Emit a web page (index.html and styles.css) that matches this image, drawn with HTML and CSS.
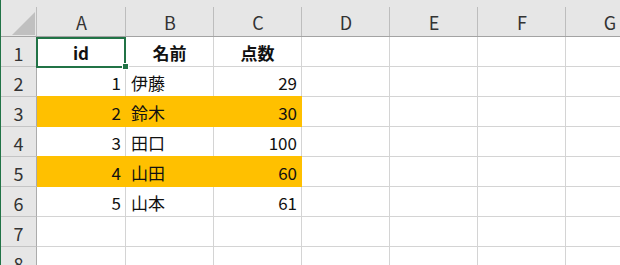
FILE: index.html
```html
<!DOCTYPE html>
<html>
<head>
  <title>Sheet1</title>
  <link rel="stylesheet" href="styles.css">
</head>
<body>
  <div class="sheet">
    <div class="corner"><span class="tri"></span></div>
    <div class="ch">A</div>
    <div class="ch">B</div>
    <div class="ch">C</div>
    <div class="ch">D</div>
    <div class="ch">E</div>
    <div class="ch">F</div>
    <div class="ch">G</div>

    <div class="rh">1</div>
    <div class="c hd sel">id</div>
    <div class="c hd">名前</div>
    <div class="c hd">点数</div>
    <div class="c"></div><div class="c"></div><div class="c"></div><div class="c"></div>

    <div class="rh">2</div>
    <div class="c num">1</div>
    <div class="c txt">伊藤</div>
    <div class="c num">29</div>
    <div class="c"></div><div class="c"></div><div class="c"></div><div class="c"></div>

    <div class="rh">3</div>
    <div class="c num fill">2</div>
    <div class="c txt fill">鈴木</div>
    <div class="c num fill">30</div>
    <div class="c"></div><div class="c"></div><div class="c"></div><div class="c"></div>

    <div class="rh">4</div>
    <div class="c num">3</div>
    <div class="c txt">田口</div>
    <div class="c num">100</div>
    <div class="c"></div><div class="c"></div><div class="c"></div><div class="c"></div>

    <div class="rh">5</div>
    <div class="c num fill">4</div>
    <div class="c txt fill">山田</div>
    <div class="c num fill">60</div>
    <div class="c"></div><div class="c"></div><div class="c"></div><div class="c"></div>

    <div class="rh">6</div>
    <div class="c num">5</div>
    <div class="c txt">山本</div>
    <div class="c num">61</div>
    <div class="c"></div><div class="c"></div><div class="c"></div><div class="c"></div>

    <div class="rh">7</div>
    <div class="c"></div><div class="c"></div><div class="c"></div><div class="c"></div>
    <div class="c"></div><div class="c"></div><div class="c"></div>

    <div class="rh">8</div>
    <div class="c"></div><div class="c"></div><div class="c"></div><div class="c"></div>
    <div class="c"></div><div class="c"></div><div class="c"></div>
  </div>
</body>
</html>
```

FILE: styles.css
```css
html, body {
  margin: 0;
  overflow: hidden;
  background-color: #fff;
}

.sheet {
  display: grid;
  grid-template-columns: 36px 89px repeat(6, 88px);
  grid-template-rows: 37px repeat(8, 30px);
  border-left: 1px solid #217346;
  font-family: "Noto Sans CJK JP", "Noto Sans", sans-serif;
  font-size: 17px;
  color: #111;
}

.sheet > div {
  box-sizing: border-box;
  display: flex;
  align-items: center;
}

/* headers */
.corner,
.ch {
  background: linear-gradient(#bdbdbd, #bdbdbd) right bottom / 1px 29px no-repeat, #e6e6e6;
  border-bottom: 1px solid #a3a3a3;
}

.corner {
  position: relative;
}

.tri {
  position: absolute;
  left: 11px;
  top: 12px;
  width: 23px;
  height: 23px;
  background-color: #c0c0c0;
  clip-path: polygon(100% 0, 100% 100%, 0 100%);
}

.ch {
  justify-content: center;
  padding-top: 8px;
  font-size: 18px;
  color: #333;
}

.rh {
  justify-content: center;
  padding-top: 2px;
  background-color: #e6e6e6;
  border-right: 1px solid #ababab;
  border-bottom: 1px solid #c4c4c4;
  font-size: 18px;
  color: #333;
}

/* cells */
.c {
  border-right: 1px solid #d4d4d4;
  border-bottom: 1px solid #d4d4d4;
  padding-top: 2px;
}

.hd {
  justify-content: center;
  font-weight: bold;
}

.num {
  justify-content: flex-end;
  padding-right: 4px;
}

.txt {
  padding-left: 5px;
}

.fill {
  background-color: #ffc000;
  border-right-color: #ffc000;
  border-bottom-color: #ffc000;
  box-shadow: 0 -1px 0 #ffc000;
}

/* active cell */
.sel {
  position: relative;
}

.sel::before {
  content: "";
  position: absolute;
  left: -1px;
  top: 0;
  width: 90px;
  height: 31px;
  box-sizing: border-box;
  border: 2px solid #217346;
  z-index: 2;
}

.sel::after {
  content: "";
  position: absolute;
  left: 85px;
  top: 26px;
  width: 5px;
  height: 5px;
  background-color: #217346;
  border: 1px solid #fff;
  z-index: 3;
}
```
